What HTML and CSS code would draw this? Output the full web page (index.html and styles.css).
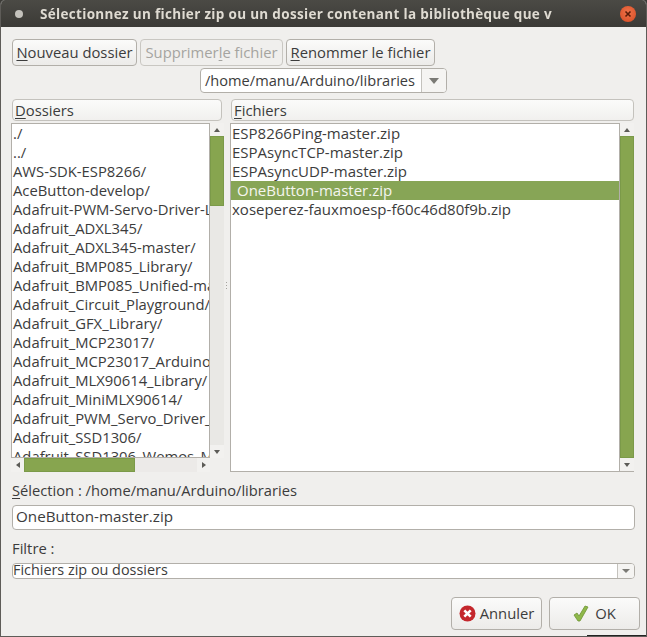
FILE: index.html
```html
<!DOCTYPE html>
<html lang="fr">
<head>
<meta charset="utf-8">
<title>Sélection</title>
<link rel="stylesheet" href="styles.css">
</head>
<body>
<div class="window">
  <header class="titlebar">
    <span class="menu-dot"></span>
    <span class="title">Sélectionnez un fichier zip ou un dossier contenant la bibliothèque que v</span>
    <span class="close"><svg width="10" height="10" viewBox="0 0 10 10"><path d="M2.5 2.5l5 5M7.5 2.5l-5 5" stroke="#5a1c08" stroke-width="1.6"/></svg></span>
  </header>
  <main class="content">
    <div class="actions">
      <button class="btn b-new"><u>N</u>ouveau dossier</button>
      <button class="btn b-del" disabled>Supprimer <u>l</u>e fichier</button>
      <button class="btn b-ren"><u>R</u>enommer le fichier</button>
    </div>
    <div class="path-row">
      <div class="combo path"><span class="combo-text">/home/manu/Arduino/libraries</span><span class="combo-arrow"><i class="tri-down"></i></span></div>
    </div>
    <div class="panes">
      <section class="pane left">
        <div class="col-head"><u>D</u>ossiers</div>
        <div class="list-wrap">
          <div class="list-row">
            <ul class="list">
              <li>./</li><li>../</li><li>AWS-SDK-ESP8266/</li><li>AceButton-develop/</li><li>Adafruit-PWM-Servo-Driver-Library/</li><li>Adafruit_ADXL345/</li><li>Adafruit_ADXL345-master/</li><li>Adafruit_BMP085_Library/</li><li>Adafruit_BMP085_Unified-master/</li><li>Adafruit_Circuit_Playground/</li><li>Adafruit_GFX_Library/</li><li>Adafruit_MCP23017/</li><li>Adafruit_MCP23017_Arduino_Library/</li><li>Adafruit_MLX90614_Library/</li><li>Adafruit_MiniMLX90614/</li><li>Adafruit_PWM_Servo_Driver_Library/</li><li>Adafruit_SSD1306/</li><li>Adafruit_SSD1306_Wemos_Mini/</li>
            </ul>
            <div class="vscroll"><span class="sb-end"><i class="tri-up"></i></span><span class="thumb-v t-left"></span><span class="track-v"></span><span class="sb-end"><i class="tri-down small"></i></span></div>
          </div>
          <div class="hscroll"><span class="sb-side"><i class="tri-left"></i></span><span class="thumb-h"></span><span class="track-h"></span><span class="sb-side"><i class="tri-right"></i></span></div>
        </div>
      </section>
      <div class="grip"></div>
      <section class="pane right">
        <div class="col-head"><u>F</u>ichiers</div>
        <div class="list-row tall">
          <ul class="list">
            <li>ESP8266Ping-master.zip</li><li>ESPAsyncTCP-master.zip</li><li>ESPAsyncUDP-master.zip</li><li class="sel">OneButton-master.zip</li><li>xoseperez-fauxmoesp-f60c46d80f9b.zip</li>
          </ul>
          <div class="vscroll"><span class="sb-end"><i class="tri-up"></i></span><span class="thumb-v t-right"></span><span class="sb-end"><i class="tri-down small"></i></span></div>
        </div>
      </section>
    </div>
    <div class="label sel-label"><u>S</u>élection : /home/manu/Arduino/libraries</div>
    <div class="entry">OneButton-master.zip</div>
    <div class="label filter-label">Filtre :</div>
    <div class="combo filter"><span class="combo-text">Fichiers zip ou dossiers</span><span class="combo-arrow"><i class="tri-down"></i></span></div>
    <div class="dialog-actions">
      <button class="btn big b-cancel"><svg width="17" height="17" viewBox="0 0 17 17"><circle cx="8.5" cy="8.5" r="8" fill="#c4272c"/><path d="M5.3 5.3l6.4 6.4M11.7 5.3l-6.4 6.4" stroke="#fff" stroke-width="2.6"/></svg>Annuler</button>
      <button class="btn big b-ok"><svg width="16" height="17" viewBox="0 0 16 17"><path d="M1 10l3-2 2 3 6-10 3 1-8 14H5z" fill="#8fb84a" stroke="#6d9433" stroke-width=".8"/></svg>OK</button>
    </div>
  </main>
  <span class="corner"></span>
</div>
</body>
</html>
```
FILE: styles.css
```css
* { box-sizing: border-box; }
html, body { margin: 0; padding: 0; background: #3c3b37; }
body { width: 647px; height: 637px; overflow: hidden; font-family: "Open Sans", "Noto Sans", sans-serif; font-size: 14.8px; color: #3c3c3c; }
u { text-decoration-thickness: 1px; text-underline-offset: 2px; }
.window { position: relative; width: 647px; height: 637px; display: flex; flex-direction: column; background: #f0efed; border: solid #5e5c58; border-width: 0 1px 1px; border-radius: 5px 5px 0 0; overflow: hidden; }
.titlebar { height: 27px; flex: none; margin: 0 -1px; display: flex; align-items: center; background: linear-gradient(#4b4a45, #3b3a36); color: #dfdbd2; font-weight: 700; font-size: 13.5px; letter-spacing: .32px; padding: 0 11px 0 15px; }
.menu-dot { width: 8px; height: 8px; border-radius: 50%; background: #c4c2bc; flex: none; }
.title { flex: 1; margin-left: 17px; white-space: nowrap; overflow: hidden; -webkit-mask-image: linear-gradient(90deg, #000 92%, transparent 99%); mask-image: linear-gradient(90deg, #000 92%, transparent 99%); width: 0; min-width: 0; padding-right: 42px; }
.close { width: 16px; height: 16px; border-radius: 50%; background: radial-gradient(circle at 50% 40%, #f0734a, #d64a22); display: flex; align-items: center; justify-content: center; flex: none; }
.content { flex: 1; padding: 12px 6px 0 10px; display: flex; flex-direction: column; min-height: 0; }
.btn { font: inherit; color: #3c3c3c; background: linear-gradient(#fbfbfa, #ecebe9); border: 1px solid #b2afa9; border-radius: 4px; height: 27px; padding: 0 0 2px; white-space: nowrap; display: inline-flex; align-items: center; justify-content: center; }
.btn svg { margin-top: 2px; }
.btn:disabled { color: #a5a4a0; background: #f0efed; border-color: #c9c7c2; }
.actions { display: flex; gap: 3px; padding-left: 1px; }
.b-new { width: 125px; }
.b-del { width: 143px; }
.b-ren { width: 149px; }
.path-row { display: flex; justify-content: flex-start; padding-left: 189px; margin-top: 2px; }
.combo { display: flex; background: #fff; border: 1px solid #b2afa9; border-radius: 4px; }
.path { width: 247px; height: 25px; line-height: 22px; font-size: 14.6px; }
.path .combo-text { flex: 1; padding-left: 4px; white-space: nowrap; }
.combo-arrow { width: 25px; border-left: 1px solid #c4c2bd; background: #f5f4f2; border-radius: 0 3px 3px 0; display: flex; align-items: center; justify-content: center; flex: none; }
.tri-down { width: 0; height: 0; border: 5px solid transparent; border-top: 6px solid #7b7a75; border-bottom: 0; }
.tri-down.small { border-width: 4px 3.5px 0; border-top-color: #5c5b57; }
.tri-up { width: 0; height: 0; border: 3.5px solid transparent; border-bottom: 4px solid #5c5b57; border-top: 0; }
.tri-left { width: 0; height: 0; border: 3.5px solid transparent; border-right: 4px solid #5c5b57; border-left: 0; }
.tri-right { width: 0; height: 0; border: 3.5px solid transparent; border-left: 4px solid #5c5b57; border-right: 0; }
.panes { display: flex; margin-top: 6px; height: 373px; }
.pane { display: flex; flex-direction: column; }
.left { width: 213px; }
.left .col-head { margin-right: 2px; }
.grip { width: 5px; flex: none; background: radial-gradient(circle, #a5a39e 0 .8px, transparent 1px); background-size: 3px 3px; background-repeat: repeat-y; background-position: 1px center; background-clip: content-box; padding: 183px 0; }
.right { width: 404px; margin-left: 1px; }
.right .list { font-size: 15px; }
.col-head { height: 22px; flex: none; margin-left: 1px; padding-left: 2px; line-height: 20px; background: linear-gradient(#fbfbfa, #f1f0ee); border: 1px solid #c4c2bd; border-radius: 4px; }
.list-wrap { flex: 1; display: flex; flex-direction: column; margin-top: 2px; min-height: 0; }
.list-wrap .list-row { flex: 1; min-height: 0; }
.list-row { display: flex; min-height: 0; }
.tall { flex: 1; margin-top: 2px; border-bottom: 1px solid #b2afa9; }
.list { flex: 1; min-width: 0; margin: 0; padding: 0; list-style: none; background: #fff; border: 1px solid #b2afa9; border-bottom: 0; overflow: hidden; }
.left .list { border-bottom: 1px solid #b2afa9; }
.list li { height: 19px; line-height: 19px; padding-left: 1px; white-space: nowrap; }
.list li.sel { background: #87a556; color: #f5f5ef; padding-left: 6px; }
.vscroll { width: 14px; flex: none; display: flex; flex-direction: column; background: #f2f1ef; }
.sb-end { height: 13px; flex: none; display: flex; align-items: center; justify-content: center; }
.thumb-v { width: 14px; background: #87a54f; border: 1px solid #7b9a49; }
.t-left { height: 70px; flex: none; }
.track-v { flex: 1; background: #e9e8e5; }
.t-right { flex: 1; }
.hscroll { height: 14px; flex: none; display: flex; width: 199px; background: #f2f1ef; }
.sb-side { width: 13px; flex: none; display: flex; align-items: center; justify-content: center; }
.thumb-h { width: 111px; background: #87a54f; border: 1px solid #7b9a49; flex: none; }
.track-h { flex: 1; background: #eceae8; }
.label { white-space: nowrap; padding-left: 1px; }
.sel-label { margin-top: 9px; height: 20px; line-height: 18px; font-size: 14.7px; }
.entry { width: 623px; height: 25px; margin-top: 4px; margin-left: 1px; line-height: 20px; padding-left: 3px; background: #fff; border: 1px solid #b2afa9; border-radius: 4px; font-size: 15.2px; }
.filter-label { margin-top: 9px; height: 20px; line-height: 18px; }
.filter { width: 623px; height: 16px; margin-top: 4px; margin-left: 1px; line-height: 12px; font-size: 14.4px; }
.filter .combo-text { flex: 1; }
.filter .combo-arrow { width: 17px; }
.filter .tri-down { border-width: 4px 4px 0; }
.dialog-actions { display: flex; justify-content: flex-end; gap: 7px; margin-top: 18px; }
.big { height: 33px; gap: 4px; }
.b-cancel { width: 91px; }
.b-ok { width: 91px; gap: 6px; }
.corner { position: absolute; right: -1px; bottom: -1px; width: 60px; height: 2px; background: #222; }
```
